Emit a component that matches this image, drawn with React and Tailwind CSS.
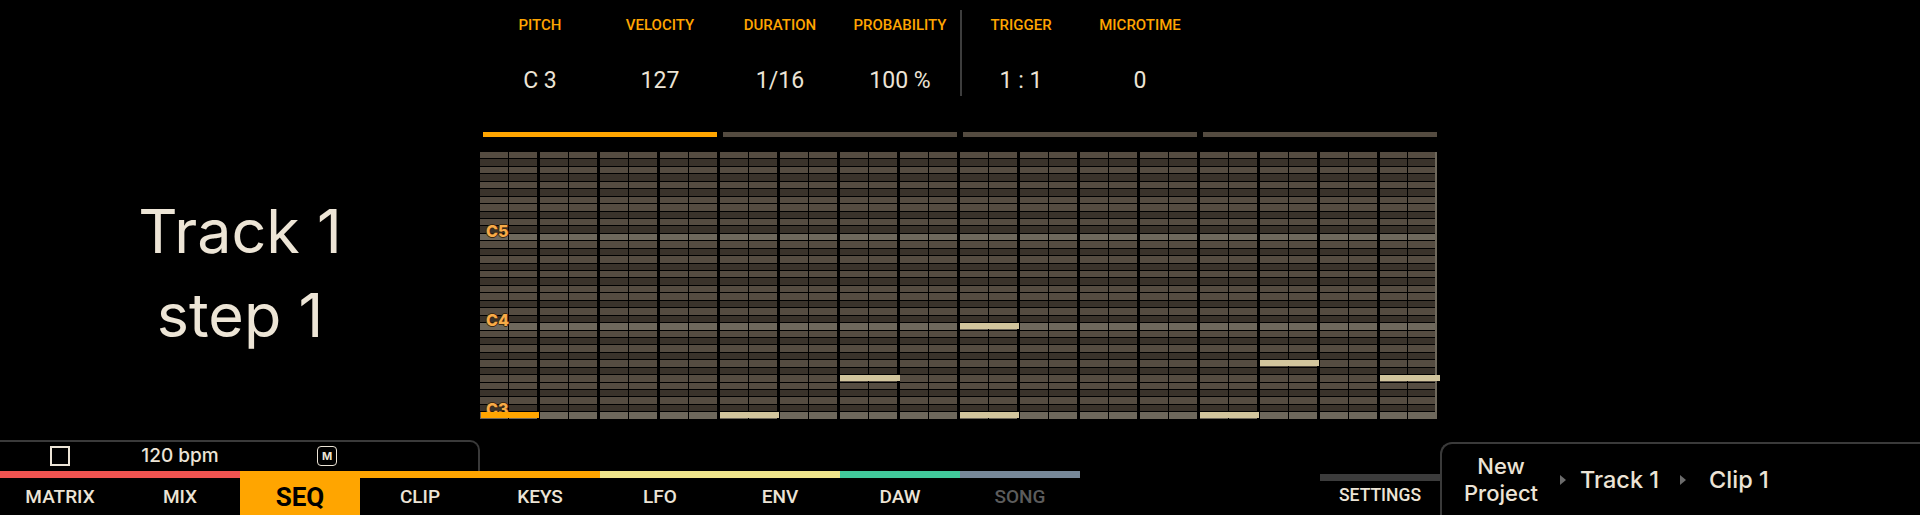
import React from "react";
import clsx from "clsx";

const COND = "font-['Roboto','Liberation_Sans',sans-serif]";
const ROUND = "font-['Inter','Noto_Sans',sans-serif]";

const PARAMS = [
  { label: "PITCH", value: "C 3" },
  { label: "VELOCITY", value: "127" },
  { label: "DURATION", value: "1/16" },
  { label: "PROBABILITY", value: "100 %" },
  { label: "TRIGGER", value: "1 : 1", divider: true },
  { label: "MICROTIME", value: "0" },
];

// rows top (B5) -> bottom (C3)
const BLACK_KEYS = [1, 3, 6, 8, 10];
const ROWS = Array.from({ length: 36 }, (_, i) => {
  const s = 11 - (i % 12);
  if (s === 0) return "bg-[#6e685c]";
  return BLACK_KEYS.includes(s) ? "bg-[#3a332b]" : "bg-[#554c41]";
});

const NOTE_LABELS = [
  { name: "C5", pos: "top-[71px]" },
  { name: "C4", pos: "top-[160px]" },
  { name: "C3", pos: "top-[249px]" },
];

const NOTES = [
  { pos: "left-[1px] top-[260px] w-[58px]", bg: "bg-[#ffa500]" },
  { pos: "left-[240px] top-[260px] w-[59px]", bg: "bg-[#d2c59d]" },
  { pos: "left-[360px] top-[223px] w-[60px]", bg: "bg-[#d2c59d]" },
  { pos: "left-[480px] top-[171px] w-[59px]", bg: "bg-[#d2c59d]" },
  { pos: "left-[480px] top-[260px] w-[59px]", bg: "bg-[#d2c59d]" },
  { pos: "left-[720px] top-[260px] w-[59px]", bg: "bg-[#d2c59d]" },
  { pos: "left-[780px] top-[208px] w-[59px]", bg: "bg-[#d2c59d]" },
  { pos: "left-[900px] top-[223px] w-[60px]", bg: "bg-[#d2c59d]" },
];

const TABS = [
  { name: "MATRIX", bar: "bg-[#ef5350]" },
  { name: "MIX", bar: "bg-[#ef5350]" },
  { name: "SEQ", bar: "bg-[#ffa500]", active: true },
  { name: "CLIP", bar: "bg-[#ffa500]" },
  { name: "KEYS", bar: "bg-[#ffa500]" },
  { name: "LFO", bar: "bg-[#f0e68c]" },
  { name: "ENV", bar: "bg-[#f0e68c]" },
  { name: "DAW", bar: "bg-[#41c99b]" },
  { name: "SONG", bar: "bg-[#778899]", disabled: true },
];

const Arrow = () => (
  <svg width="6" height="10" viewBox="0 0 6 10" className="shrink-0">
    <polygon points="0,0 6,5 0,10" fill="#6b6b6b" />
  </svg>
);

const StepGrid = () => (
  <div className="relative mt-[15px] flex h-[267px]">
    {Array.from({ length: 16 }, (_, step) => (
      <div key={step} className="flex h-full w-[60px] pr-[3px]">
        <div
          className={clsx(
            "flex h-full flex-1 flex-col gap-px",
            step === 15 && "border-r-2 border-[#6e685c]"
          )}
        >
          {ROWS.map((bg, r) => (
            <div key={r} className="flex flex-1 gap-px">
              <div className={clsx("flex-1", bg)} />
              <div className={clsx("flex-1", bg)} />
            </div>
          ))}
        </div>
      </div>
    ))}

    {NOTE_LABELS.map((l) => (
      <span
        key={l.name}
        className={clsx(
          "absolute left-[6px] text-[16px] font-extrabold leading-[16px] text-[#f7ab48] [text-shadow:-1px_0_#3b2a14,1px_0_#3b2a14,0_-1px_#3b2a14,0_1px_#3b2a14]",
          ROUND,
          l.pos
        )}
      >
        {l.name}
      </span>
    ))}

    {NOTES.map((n, i) => (
      <div key={i} className={clsx("absolute h-[6px]", n.pos, n.bg)} />
    ))}
  </div>
);

export default function App() {
  return (
    <div className="flex h-[515px] w-[1920px] flex-col overflow-hidden bg-black text-[#ece4d6]">
      {/* main area */}
      <div className="flex h-[440px]">
        <div
          className={clsx(
            "flex w-[480px] flex-col items-center pt-[189px] text-[61px] leading-[84px] text-[#ede5d6]",
            ROUND
          )}
        >
          <span>Track 1</span>
          <span>step 1</span>
        </div>

        <div className="flex w-[960px] flex-col">
          {/* step params */}
          <div className={clsx("flex h-[132px] items-start pt-[10px]", COND)}>
            {PARAMS.map((p) => (
              <div
                key={p.label}
                className={clsx(
                  "flex h-[86px] w-[120px] flex-col items-center pt-[5px]",
                  p.divider && "border-l-2 border-[#3d3d3d]"
                )}
              >
                <span className="text-[15px] font-medium leading-[20px] text-[#ffa500]">
                  {p.label}
                </span>
                <span className="mt-[32px] text-[23px] leading-[28px] text-[#ece4d6]">
                  {p.value}
                </span>
              </div>
            ))}
          </div>

          {/* page bars */}
          <div className="flex h-[5px] gap-[6px] px-[3px]">
            <div className="flex-1 bg-[#ffa500]" />
            <div className="flex-1 bg-[#544b40]" />
            <div className="flex-1 bg-[#544b40]" />
            <div className="flex-1 bg-[#544b40]" />
          </div>

          <StepGrid />
        </div>
      </div>

      {/* bottom bar */}
      <div className="flex h-[75px]">
        <div className="flex w-[1080px] flex-col">
          <div className="flex h-[34px]">
            <div className="flex w-[480px] items-center rounded-tr-[10px] border-r-2 border-t-2 border-[#3a3a3a]">
              <div className="flex w-[120px] justify-center">
                <div className="h-[20px] w-[20px] border-2 border-[#ece4d6]" />
              </div>
              <div className={clsx("flex w-[120px] justify-center text-[19px] font-medium", ROUND)}>
                120 bpm
              </div>
              <div className="flex w-[174px] justify-center">
                <div
                  className={clsx(
                    "flex h-[20px] w-[20px] items-center justify-center rounded-[4px] border-[1.5px] border-[#ece4d6] text-[11px] font-bold leading-none",
                    ROUND
                  )}
                >
                  M
                </div>
              </div>
            </div>
          </div>

          <div className={clsx("flex flex-1", COND)}>
            {TABS.map((t) => (
              <div
                key={t.name}
                className={clsx("flex w-[120px] flex-col", t.active && "bg-[#ffa500]")}
              >
                <div className={clsx("h-[7px]", t.bar)} />
                <div
                  className={clsx(
                    "flex flex-1 items-center justify-center pb-[6px]",
                    t.active
                      ? "text-[26px] font-bold text-black"
                      : "text-[19px] font-medium",
                    t.disabled && "text-[#5c5c5c]"
                  )}
                >
                  {t.name}
                </div>
              </div>
            ))}
          </div>
        </div>

        <div className="w-[240px]" />

        <div className={clsx("flex w-[120px] flex-col pt-[34px]", COND)}>
          <div className="h-[7px] bg-[#3c3c3c]" />
          <div className="flex flex-1 items-center justify-center pb-[6px] text-[17.5px] font-medium">
            SETTINGS
          </div>
        </div>

        <div
          className={clsx(
            "mt-[2px] flex flex-1 items-center rounded-tl-[12px] border-l-2 border-t-2 border-[#3a3a3a] text-[23.5px] font-medium",
            ROUND
          )}
        >
          <div className="flex w-[118px] flex-col items-center text-[22px] leading-[27px]">
            <span>New</span>
            <span>Project</span>
          </div>
          <Arrow />
          <span className="ml-[14px]">Track 1</span>
          <span className="ml-[21px]">
            <Arrow />
          </span>
          <span className="ml-[23px]">Clip 1</span>
        </div>
      </div>
    </div>
  );
}
